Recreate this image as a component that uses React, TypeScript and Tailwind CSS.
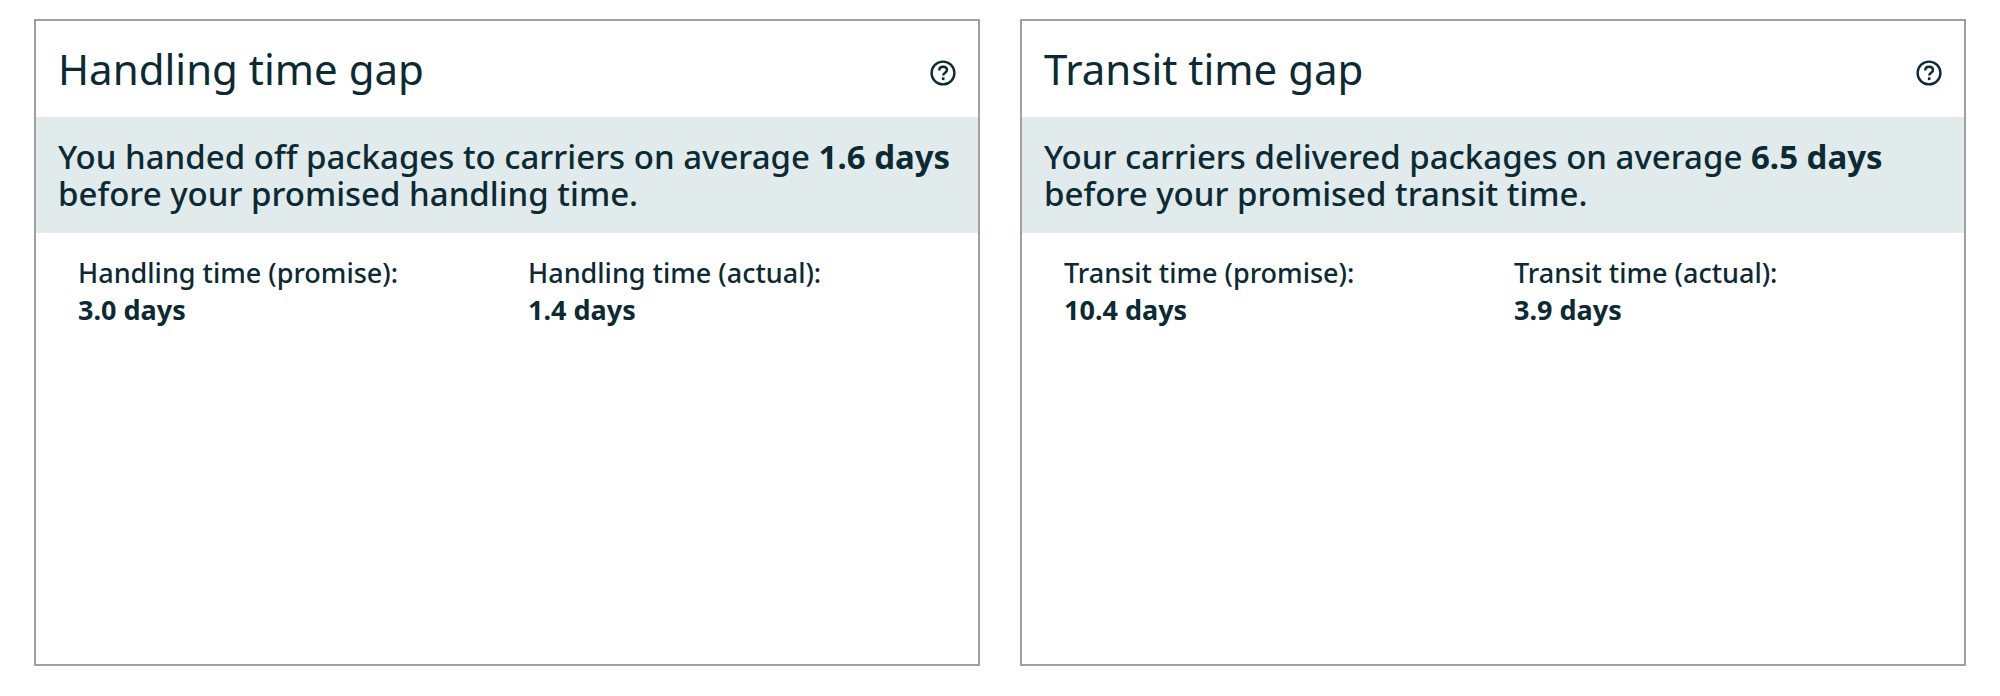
type Metric = { label: string; value: string };

type GapCardProps = {
  title: string;
  lead: string;
  gap: string;
  rest: string;
  metrics: Metric[];
};

function HelpIcon() {
  return (
    <svg viewBox="0 0 26 26" className="size-[26px]" fill="none" stroke="currentColor" aria-hidden="true">
      <circle cx="13" cy="13" r="11.4" strokeWidth="2.4" />
      <path d="M9.2 10.4c0-2.2 1.6-3.7 3.9-3.7s3.9 1.4 3.9 3.3c0 2.8-3.8 2.8-3.8 5.6" strokeWidth="2.4" />
      <path d="M13.2 17.3v2.8" strokeWidth="2.6" />
    </svg>
  );
}

function GapCard({ title, lead, gap, rest, metrics }: GapCardProps) {
  return (
    <section className="min-h-[647px] min-w-0 flex-1 border-2 border-[#a0a0a0] bg-white">
      <header className="flex items-center justify-between px-[22px] py-[18px]">
        <h2 className="text-[42px] leading-[60px] font-normal">{title}</h2>
        <button type="button" aria-label={`About ${title}`} className="mt-2">
          <HelpIcon />
        </button>
      </header>
      <p className="bg-[#e2ebec] px-[22px] py-[21px] text-[33px] leading-[37px]">
        {lead} <strong className="font-bold">{gap}</strong>
        <br />
        {rest}
      </p>
      <dl className="grid grid-cols-2 pt-[21px] pl-[42px] text-[27px] leading-[37px]">
        {metrics.map((metric) => (
          <div key={metric.label}>
            <dt>{metric.label}</dt>
            <dd className="font-bold">{metric.value}</dd>
          </div>
        ))}
      </dl>
    </section>
  );
}

export default function App() {
  return (
    <main className="flex gap-10 bg-white px-[34px] pt-[19px] pb-[30px] font-['Noto_Sans',sans-serif] font-medium text-[#0b2a33]">
      <GapCard
        title="Handling time gap"
        lead="You handed off packages to carriers on average"
        gap="1.6 days"
        rest="before your promised handling time."
        metrics={[
          { label: "Handling time (promise):", value: "3.0 days" },
          { label: "Handling time (actual):", value: "1.4 days" },
        ]}
      />
      <GapCard
        title="Transit time gap"
        lead="Your carriers delivered packages on average"
        gap="6.5 days"
        rest="before your promised transit time."
        metrics={[
          { label: "Transit time (promise):", value: "10.4 days" },
          { label: "Transit time (actual):", value: "3.9 days" },
        ]}
      />
    </main>
  );
}
